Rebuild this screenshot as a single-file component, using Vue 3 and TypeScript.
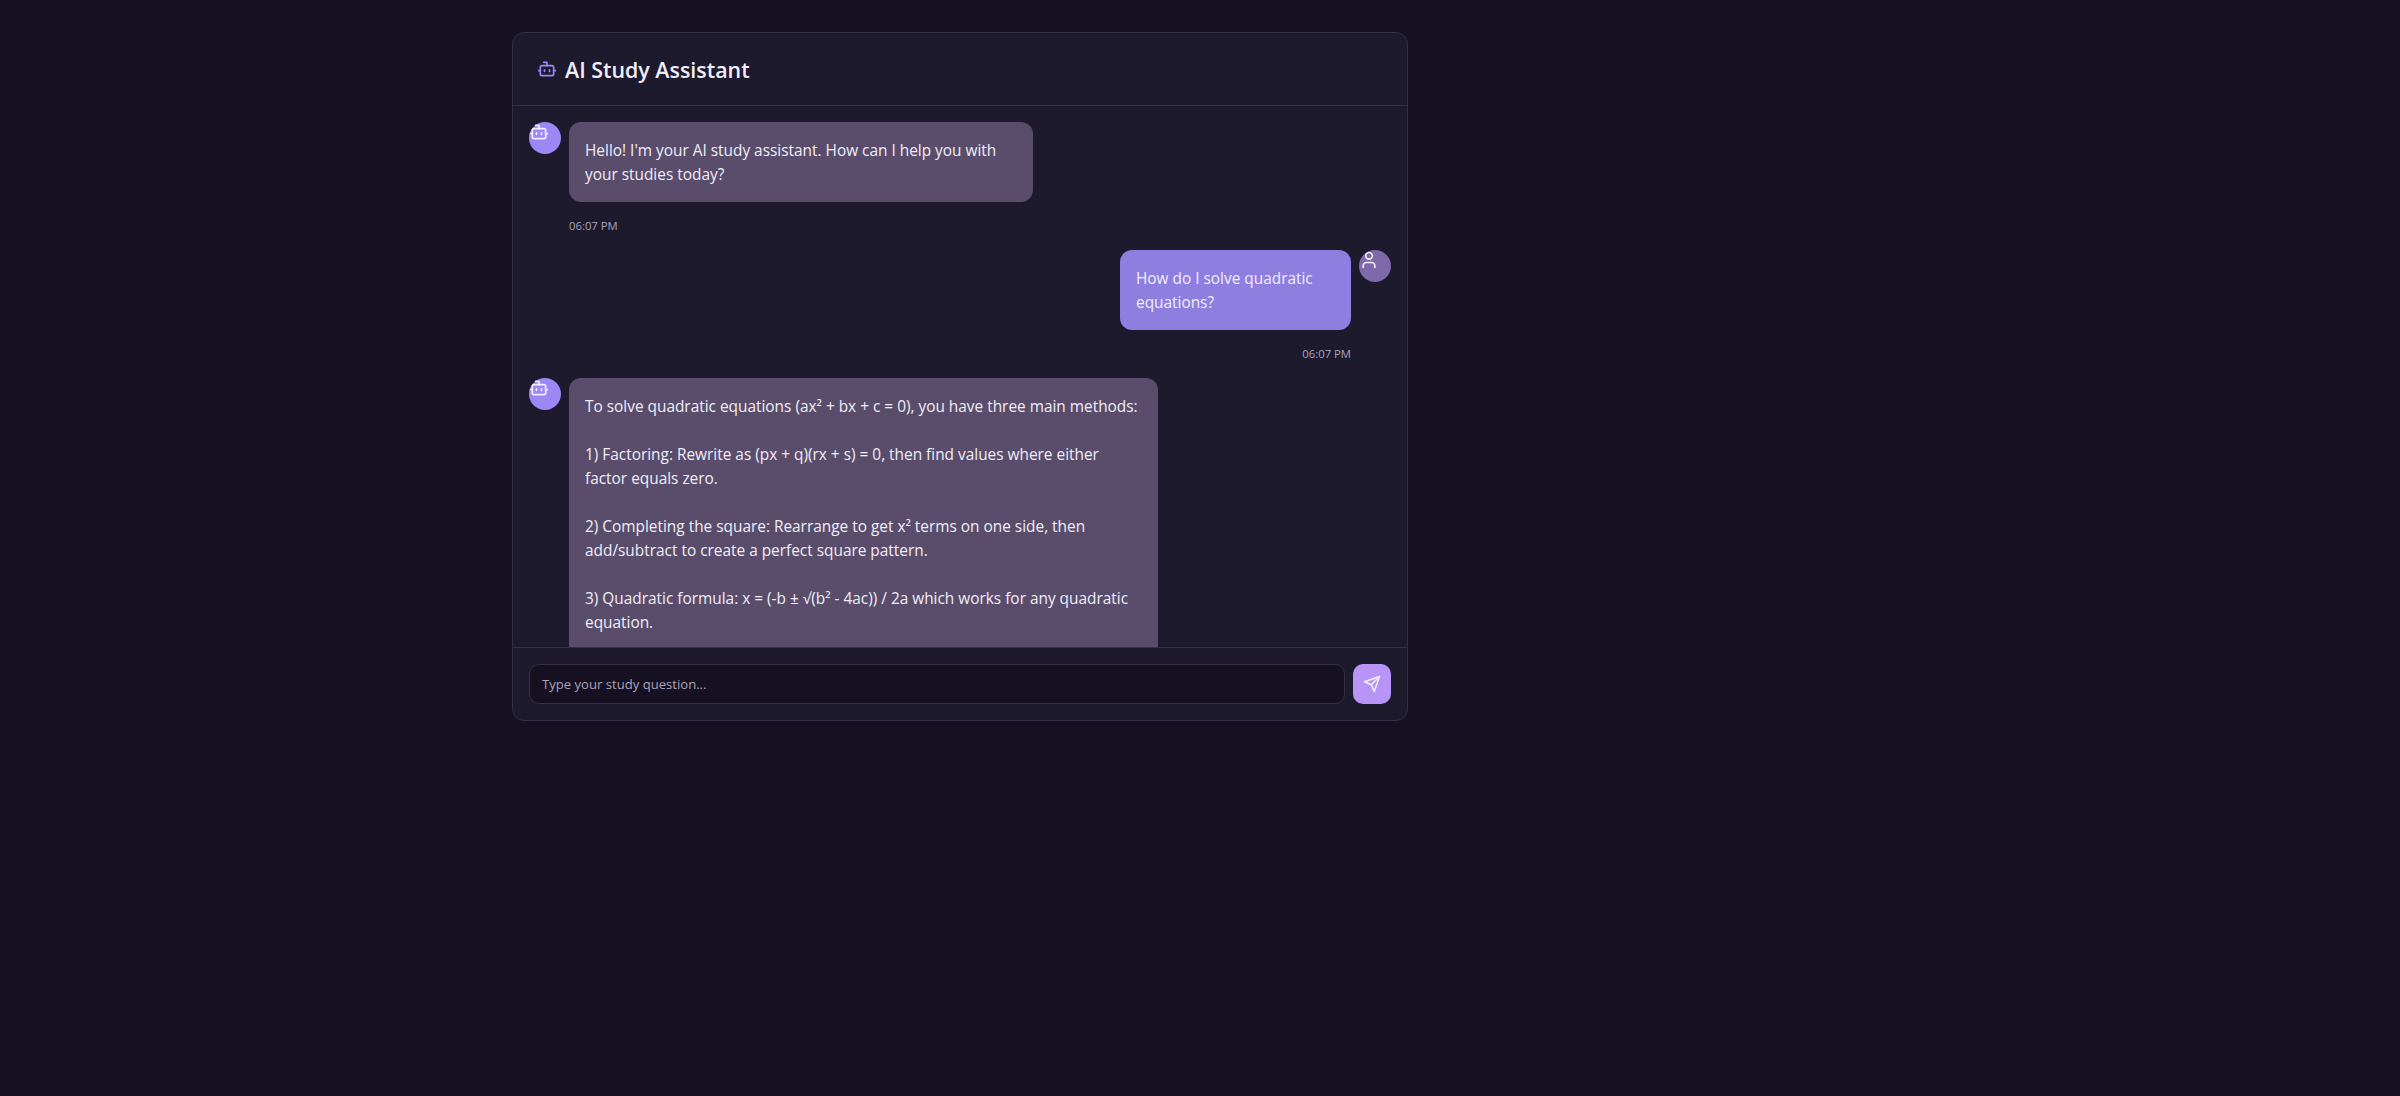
<template>
  <div class="page">
    <section class="chat">
      <header class="chat-header">
        <svg class="header-icon" width="20" height="20" viewBox="0 0 24 24" fill="none" stroke="currentColor" stroke-width="2" stroke-linecap="round" stroke-linejoin="round">
          <path d="M12 8V4H8" />
          <rect x="4" y="8" width="16" height="12" rx="2" />
          <path d="M2 14h2M20 14h2M15 13v2M9 13v2" />
        </svg>
        <h1>AI Study Assistant</h1>
      </header>

      <div class="messages">
        <div v-for="msg in messages" :key="msg.id" class="row" :class="msg.role">
          <div class="avatar">
            <svg v-if="msg.role === 'bot'" width="20" height="20" viewBox="0 0 24 24" fill="none" stroke="currentColor" stroke-width="2" stroke-linecap="round" stroke-linejoin="round">
              <path d="M12 8V4H8" />
              <rect x="4" y="8" width="16" height="12" rx="2" />
              <path d="M2 14h2M20 14h2M15 13v2M9 13v2" />
            </svg>
            <svg v-else width="20" height="20" viewBox="0 0 24 24" fill="none" stroke="currentColor" stroke-width="2" stroke-linecap="round" stroke-linejoin="round">
              <path d="M19 21v-2a4 4 0 0 0-4-4H9a4 4 0 0 0-4 4v2" />
              <circle cx="12" cy="7" r="4" />
            </svg>
          </div>
          <div class="body">
            <div class="bubble" :style="{ width: msg.width + 'px' }">{{ msg.text }}</div>
            <div class="time">{{ msg.time }}</div>
          </div>
        </div>
      </div>

      <footer class="composer">
        <input class="field" type="text" placeholder="Type your study question..." />
        <button class="send" type="button" aria-label="Send">
          <svg width="18" height="18" viewBox="0 0 24 24" fill="none" stroke="currentColor" stroke-width="2" stroke-linecap="round" stroke-linejoin="round">
            <path d="m22 2-7 20-4-9-9-4Z" />
            <path d="M22 2 11 13" />
          </svg>
        </button>
      </footer>
    </section>
  </div>
</template>

<script setup lang="ts">
interface Message {
  id: number;
  role: "bot" | "user";
  text: string;
  time: string;
  width: number;
}

const messages: Message[] = [
  {
    id: 1,
    role: "bot",
    text: "Hello! I'm your AI study assistant. How can I help you with your studies today?",
    time: "06:07 PM",
    width: 464,
  },
  {
    id: 2,
    role: "user",
    text: "How do I solve quadratic equations?",
    time: "06:07 PM",
    width: 231,
  },
  {
    id: 3,
    role: "bot",
    text: "To solve quadratic equations (ax² + bx + c = 0), you have three main methods:\n\n1) Factoring: Rewrite as (px + q)(rx + s) = 0, then find values where either factor equals zero.\n\n2) Completing the square: Rearrange to get x² terms on one side, then add/subtract to create a perfect square pattern.\n\n3) Quadratic formula: x = (-b ± √(b² - 4ac)) / 2a which works for any quadratic equation.",
    time: "06:07 PM",
    width: 589,
  },
];
</script>

<style>
html,
body {
  margin: 0;
  background: #151120;
}
</style>

<style scoped>
.page {
  min-height: 100vh;
  box-sizing: border-box;
  padding: 32px 0 0 512px;
  background: #151120;
  font-family: "Open Sans", "Noto Sans", sans-serif;
}

.chat {
  width: 896px;
  height: 689px;
  box-sizing: border-box;
  display: flex;
  flex-direction: column;
  background: #1e1a2e;
  border: 1px solid #352f47;
  border-radius: 12px;
  overflow: hidden;
}

.chat-header {
  height: 73px;
  box-sizing: border-box;
  flex: none;
  display: flex;
  align-items: center;
  gap: 8px;
  padding: 0 24px;
  border-bottom: 1px solid #352f47;
}

.header-icon {
  color: #9b87f5;
}

.chat-header h1 {
  margin: 2px 0 0;
  font-size: 21.4px;
  font-weight: 600;
  line-height: 28px;
  color: #f1edf9;
}

.messages {
  flex: 1;
  min-height: 0;
  overflow: hidden;
  display: flex;
  flex-direction: column;
  gap: 16px;
  padding: 16px;
}

.row {
  display: flex;
  gap: 8px;
  flex: none;
}

.row.user {
  flex-direction: row-reverse;
}

.avatar {
  width: 32px;
  height: 32px;
  flex: none;
  border-radius: 50%;
  background: #9b87f5;
  color: #f1edf9;
}

.avatar svg {
  display: block;
}

.row.user .avatar {
  background: #7e69ab;
}

.body {
  display: flex;
  flex-direction: column;
}

.row.user .body {
  align-items: flex-end;
}

.bubble {
  box-sizing: border-box;
  padding: 17px 16px 15px;
  border-radius: 12px;
  background: #5a4d6b;
  color: #f1edf9;
  font-size: 15.4px;
  line-height: 24px;
  white-space: pre-line;
}

/* last message runs on under the composer, its rounded end is out of view */
.row:last-child .bubble {
  padding-bottom: 48px;
}

.row.user .bubble {
  background: #8e7ee0;
}

.time {
  margin-top: 16px;
  font-size: 11.3px;
  line-height: 16px;
  color: #a9a3bd;
}

.composer {
  flex: none;
  display: flex;
  gap: 8px;
  padding: 16px;
  border-top: 1px solid #352f47;
}

.field {
  flex: 1;
  height: 40px;
  box-sizing: border-box;
  padding: 0 12px;
  background: #151120;
  border: 1px solid #352f47;
  border-radius: 10px;
  color: #f1edf9;
  font-family: inherit;
  font-size: 13.1px;
  outline: none;
}

.field::placeholder {
  color: #a9a3bd;
}

.send {
  width: 38px;
  height: 40px;
  flex: none;
  display: flex;
  align-items: center;
  justify-content: center;
  padding: 0;
  border: none;
  border-radius: 10px;
  background: #b794f6;
  color: #f1edf9;
}
</style>
